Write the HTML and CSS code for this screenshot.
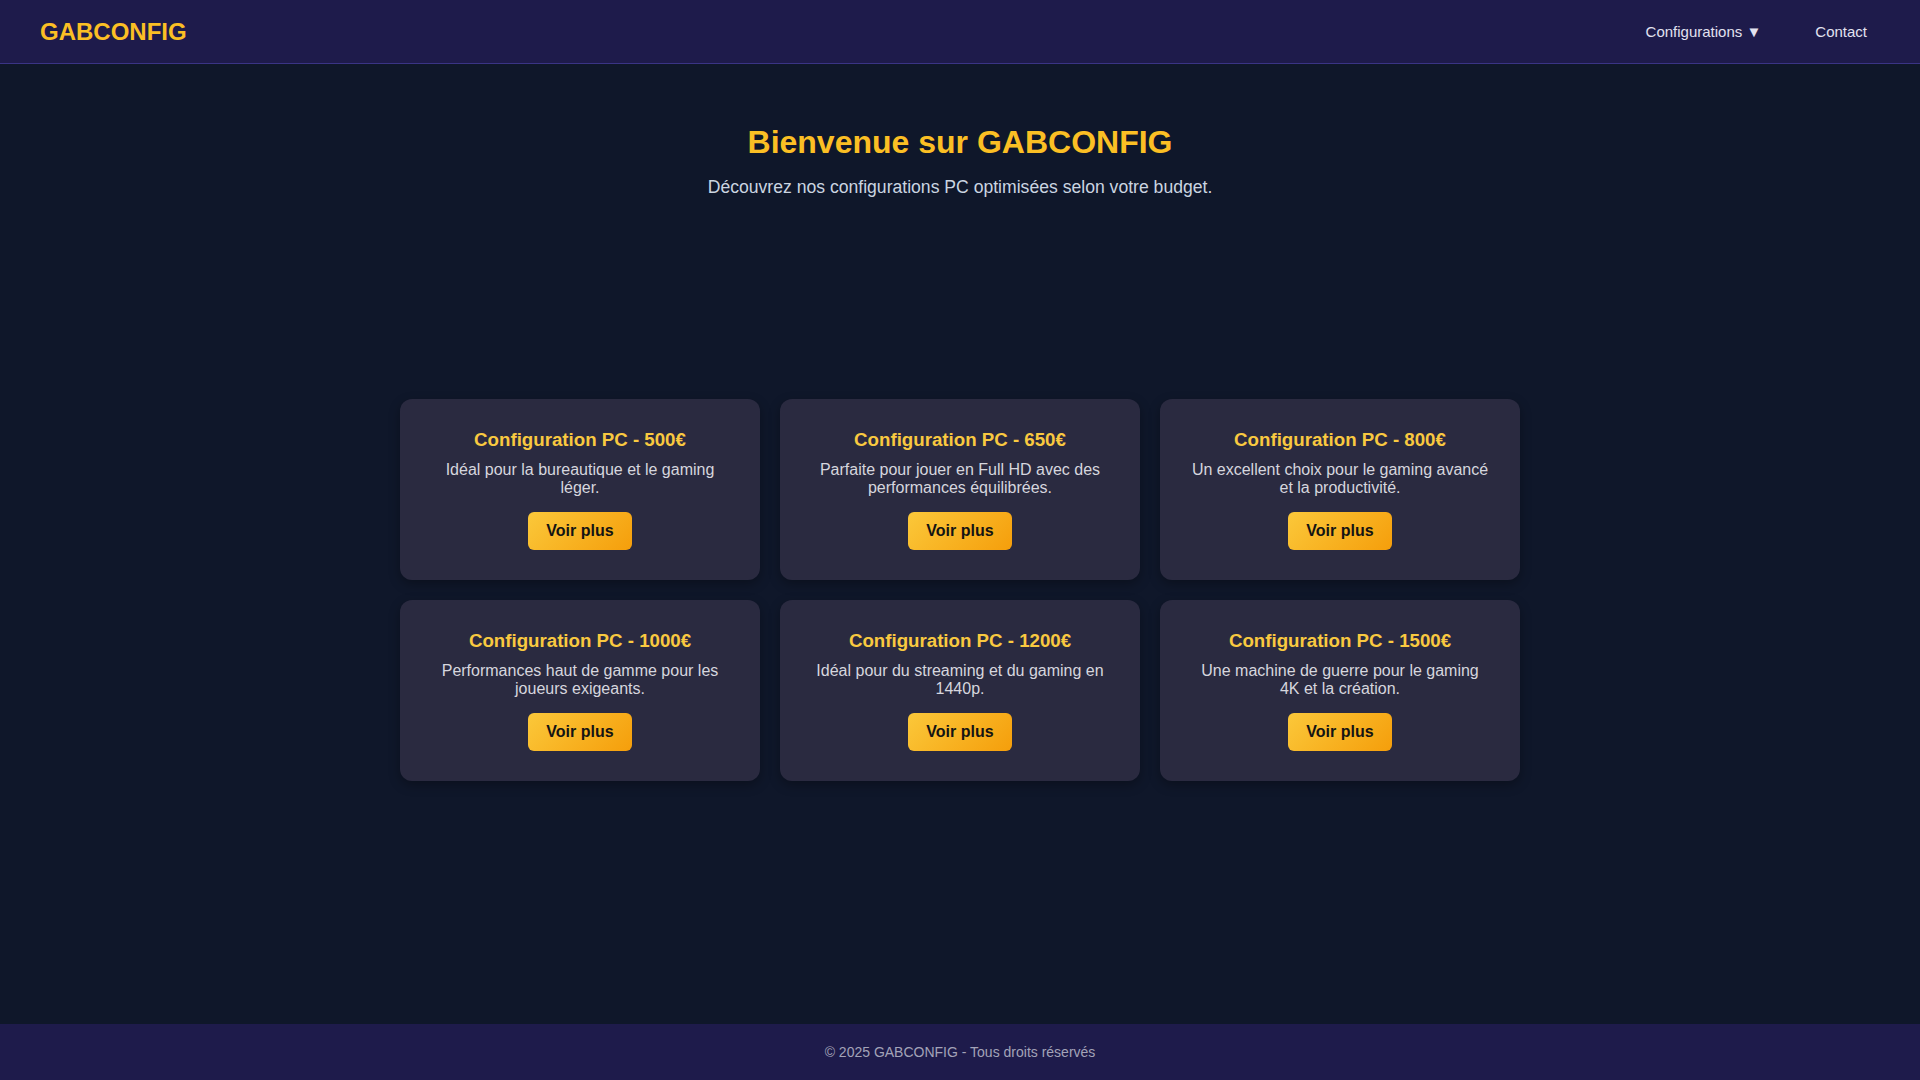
FILE: index.html
```html
<!DOCTYPE html>
<html lang="fr">
<head>
<meta charset="utf-8">
<title>GABCONFIG</title>
<link rel="stylesheet" href="styles.css">
</head>
<body>
<header class="site-header">
  <div class="logo">GABCONFIG</div>
  <nav class="nav">
    <a class="nav-link" href="#">Configurations ▼</a>
    <a class="nav-link" href="#">Contact</a>
  </nav>
</header>
<main class="main">
  <section class="hero">
    <h1 class="hero-title">Bienvenue sur GABCONFIG</h1>
    <p class="hero-sub">Découvrez nos configurations PC optimisées selon votre budget.</p>
  </section>
  <section class="cards">
    <div class="card">
      <h3 class="card-title">Configuration PC - 500€</h3>
      <p class="card-desc">Idéal pour la bureautique et le gaming léger.</p>
      <a class="btn" href="#">Voir plus</a>
    </div>
    <div class="card">
      <h3 class="card-title">Configuration PC - 650€</h3>
      <p class="card-desc">Parfaite pour jouer en Full HD avec des performances équilibrées.</p>
      <a class="btn" href="#">Voir plus</a>
    </div>
    <div class="card">
      <h3 class="card-title">Configuration PC - 800€</h3>
      <p class="card-desc">Un excellent choix pour le gaming avancé et la productivité.</p>
      <a class="btn" href="#">Voir plus</a>
    </div>
    <div class="card">
      <h3 class="card-title">Configuration PC - 1000€</h3>
      <p class="card-desc">Performances haut de gamme pour les joueurs exigeants.</p>
      <a class="btn" href="#">Voir plus</a>
    </div>
    <div class="card">
      <h3 class="card-title">Configuration PC - 1200€</h3>
      <p class="card-desc">Idéal pour du streaming et du gaming en 1440p.</p>
      <a class="btn" href="#">Voir plus</a>
    </div>
    <div class="card">
      <h3 class="card-title">Configuration PC - 1500€</h3>
      <p class="card-desc">Une machine de guerre pour le gaming 4K et la création.</p>
      <a class="btn" href="#">Voir plus</a>
    </div>
  </section>
</main>
<footer class="site-footer">© 2025 GABCONFIG - Tous droits réservés</footer>
</body>
</html>
```
FILE: styles.css
```css
* { box-sizing: border-box; }
html, body { margin: 0; padding: 0; }
body {
  background: #0f172a;
  font-family: "Liberation Sans", Arial, sans-serif;
  color: #e5e7eb;
  min-height: 1080px;
  display: flex;
  flex-direction: column;
}
.site-header {
  height: 64px;
  background: #1e1b4b;
  border-bottom: 1px solid #3a3485;
  display: flex;
  align-items: center;
  justify-content: space-between;
  padding: 0 37px 0 40px;
}
.logo {
  color: #fbbf24;
  font-size: 24px;
  font-weight: bold;
}
.nav {
  display: flex;
  gap: 22px;
}
.nav-link {
  color: #e2e2f0;
  text-decoration: none;
  font-size: 15px;
  padding: 8px 16px;
}
.main {
  flex: 1;
  padding-top: 60px;
}
.hero {
  text-align: center;
}
.hero-title {
  margin: 0 0 16px;
  font-size: 32px;
  color: #fbbf24;
  font-weight: bold;
}
.hero-sub {
  margin: 0;
  font-size: 17.6px;
  color: #cbd5e1;
}
.cards {
  width: 1120px;
  margin: 201px auto 0;
  display: grid;
  grid-template-columns: repeat(3, 360px);
  gap: 20px;
}
.card {
  background: #2a2a40;
  border-radius: 12px;
  padding: 30px;
  text-align: center;
  box-shadow: 0 4px 12px rgba(0, 0, 0, 0.3);
}
.card-title {
  margin: 0 0 10px;
  font-size: 18.7px;
  color: #f9c940;
  font-weight: bold;
}
.card-desc {
  margin: 0 0 15px;
  font-size: 16px;
  color: #d6d6de;
}
.btn {
  display: inline-block;
  padding: 10px 18px;
  font-size: 16px;
  font-weight: bold;
  color: #141414;
  text-decoration: none;
  border-radius: 6px;
  background: linear-gradient(135deg, #fbc83a, #f59e0b);
}
.site-footer {
  height: 56px;
  background: #1e1b4b;
  color: #a3a3b8;
  font-size: 14px;
  display: flex;
  align-items: center;
  justify-content: center;
}
```
